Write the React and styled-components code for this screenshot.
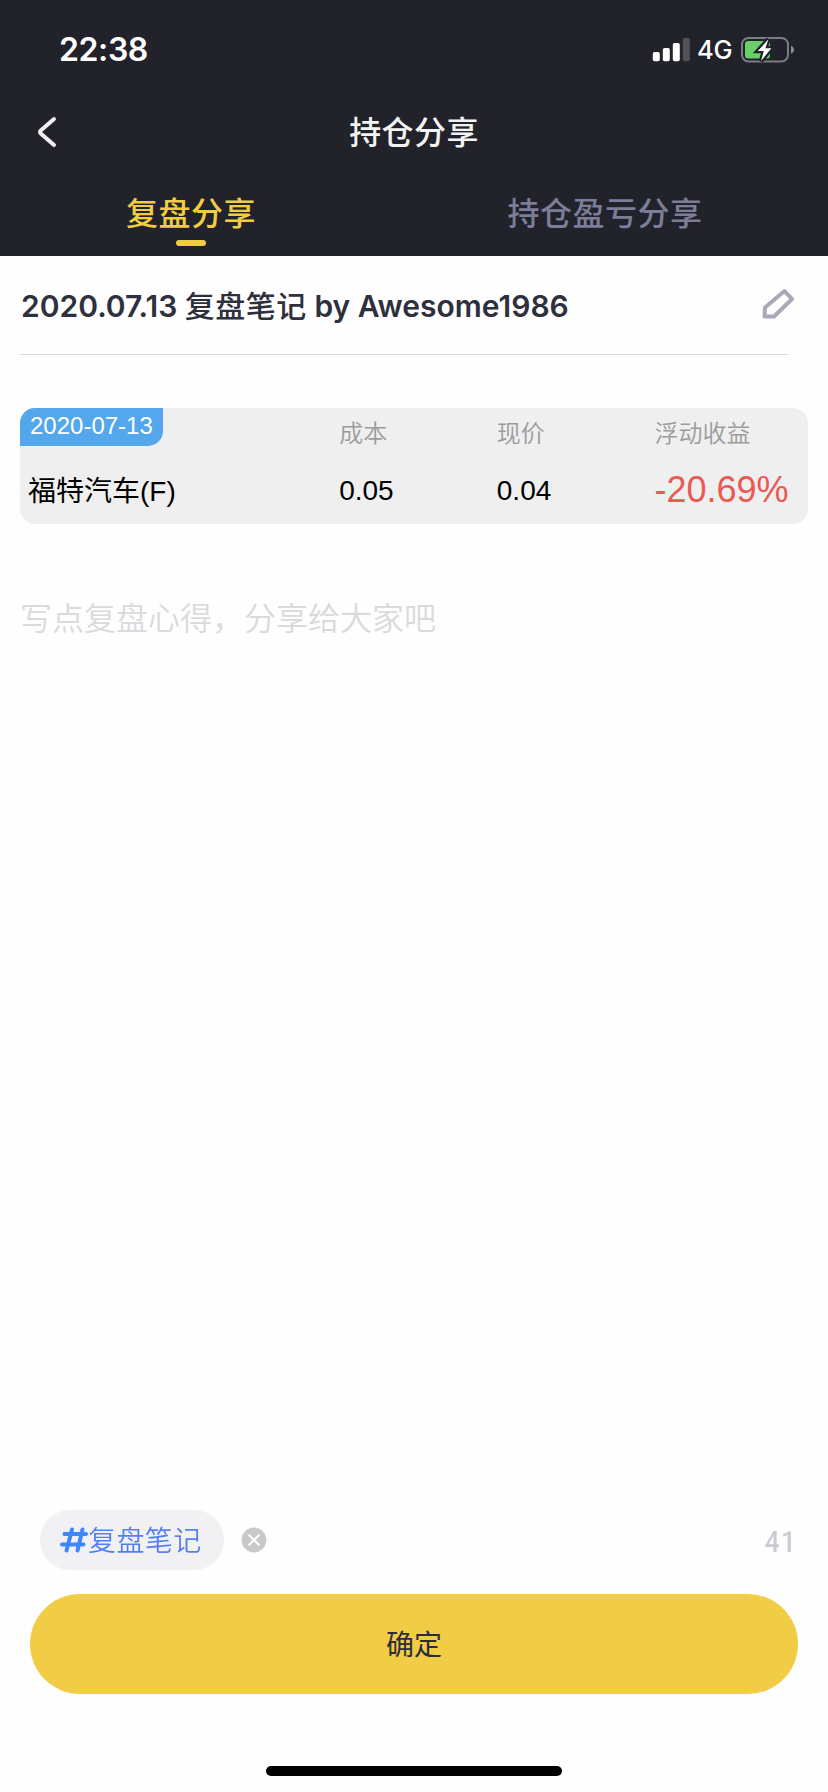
import React from 'react';
import styled, { createGlobalStyle } from 'styled-components';

const GlobalStyle = createGlobalStyle`
  *, *::before, *::after { box-sizing: border-box; }
  body { margin: 0; background: #fefefe; }
`;

const ui = `Inter, 'Noto Sans CJK SC', sans-serif`;
const plain = `'Liberation Sans', 'Noto Sans CJK SC', sans-serif`;

const Screen = styled.div`
  display: flex;
  flex-direction: column;
  width: 828px;
  height: 1792px;
  background: #fefefe;
  font-family: ${ui};
  overflow: hidden;
`;

const Header = styled.header`
  height: 256px;
  background: #21222a;
  color: #f2f2f2;
`;

const StatusBar = styled.div`
  display: flex;
  align-items: center;
  justify-content: space-between;
  height: 99px;
  padding: 0 34px 0 59px;
  color: #fff;
`;

const Clock = styled.span`
  padding-top: 1px;
  font-size: 32px;
  font-weight: 600;
  line-height: 40px;
  letter-spacing: -0.4px;
`;

const StatusIcons = styled.div`
  display: flex;
  align-items: center;
  height: 40px;
`;

const Network = styled.span`
  width: 51px;
  padding: 1px 0 0 7px;
  font-size: 25.5px;
  font-weight: 500;
  line-height: 40px;
  letter-spacing: -0.3px;
`;

const NavBar = styled.div`
  display: grid;
  grid-template-columns: 100px 1fr 100px;
  align-items: center;
  height: 66px;
`;

const BackButton = styled.button`
  display: flex;
  padding: 0 0 0 36px;
  border: 0;
  background: none;
`;

const NavTitle = styled.h1`
  margin: 0;
  padding-top: 2px;
  font-size: 32px;
  font-weight: 500;
  line-height: 44px;
  letter-spacing: 0.4px;
  text-align: center;
`;

const Tabs = styled.nav`
  display: flex;
`;

const Tab = styled.div`
  display: flex;
  flex-direction: column;
  align-items: center;
  gap: 4px;
  width: ${(p) => p.$width}px;
  padding-top: 26px;
  color: ${(p) => (p.$active ? '#f0cd45' : '#7c7d98')};
  font-size: 32px;
  font-weight: 500;
  line-height: 45px;
  letter-spacing: 0.5px;
  white-space: nowrap;
`;

const TabMark = styled.i`
  width: 30px;
  height: 6px;
  border-radius: 3px;
  background: #f0cd45;
`;

const TitleRow = styled.div`
  display: flex;
  align-items: center;
  justify-content: space-between;
  height: 99px;
  margin: 0 40px 0 20px;
  padding-left: 1px;
  border-bottom: 1px solid #dadada;
`;

const NoteTitle = styled.h2`
  margin: 1px 0 0;
  color: #2f303d;
  font-size: 30px;
  font-weight: 600;
  line-height: 44px;
  white-space: nowrap;
`;

const NoteKind = styled.span`
  font-weight: 500;
  letter-spacing: 0.5px;
`;

const EditIcon = styled.svg`
  flex: none;
  margin: 0 -7px 2px 0;
`;

const Card = styled.section`
  display: grid;
  grid-template-columns: 2fr 1fr 1fr 1fr;
  grid-template-rows: 50px 66px;
  width: 788px;
  margin: 53px 20px 0;
  border-radius: 15px;
  background: #efefef;
  font-family: ${plain};
  overflow: hidden;
`;

const DateBadge = styled.div`
  justify-self: start;
  width: 143px;
  height: 38px;
  padding-left: 10px;
  border-radius: 0 0 15px 0;
  background: #54a7ec;
  color: #fff;
  font-size: 24px;
  line-height: 36px;
`;

const Label = styled.div`
  padding-left: 4px;
  color: #9b9b9b;
  font-size: 24px;
  font-weight: 350;
  line-height: 52px;
`;

const Value = styled.div`
  padding-left: ${(p) => (p.$name ? 8 : 4)}px;
  color: ${(p) => (p.$loss ? '#ea5a55' : '#000')};
  font-size: ${(p) => (p.$loss ? 36 : 28)}px;
  line-height: ${(p) => (p.$loss ? 64 : p.$name ? 68 : 66)}px;
  white-space: nowrap;
`;

const Editor = styled.div`
  flex: 1;
  padding: 72px 20px 0;
  color: #dadadd;
  font-size: 32px;
  font-weight: 350;
  line-height: 46px;
`;

const TagBar = styled.div`
  display: flex;
  align-items: center;
  height: 60px;
  margin: 0 31px 24px 40px;
`;

const Tag = styled.div`
  display: flex;
  align-items: center;
  width: 184px;
  height: 60px;
  padding-left: 20px;
  border-radius: 30px;
  background: #f1f1f4;
`;

const TagText = styled.span`
  padding: 2px 0 0 0;
  background: linear-gradient(90deg, #4a80f8, #5b7cf2);
  background-clip: text;
  color: transparent;
  font-size: 28px;
  font-weight: 350;
  line-height: 40px;
  letter-spacing: 0.4px;
`;

const RemoveButton = styled.button`
  display: flex;
  margin-left: 17px;
  padding: 0;
  border: 0;
  background: none;
`;

const Counter = styled.span`
  margin-left: auto;
  padding-top: 3px;
  color: #c9cad3;
  font-family: Roboto, sans-serif;
  font-size: 30px;
  font-weight: 500;
  line-height: 40px;
  letter-spacing: 1.5px;
  transform: scaleX(0.87);
  transform-origin: right center;
`;

const Confirm = styled.button`
  height: 100px;
  margin: 0 30px;
  padding: 0 0 2px;
  border: 0;
  border-radius: 50px;
  background: #f0cd45;
  color: #2c2d3a;
  font-family: ${ui};
  font-size: 28px;
  font-weight: 400;
`;

const HomeIndicator = styled.div`
  align-self: center;
  width: 296px;
  height: 10px;
  margin: 72px 0 16px;
  border-radius: 5px;
  background: #000;
`;

const Signal = () => (
  <svg width="38" height="24" viewBox="0 0 38 24" fill="#fff">
    <rect x="0.8" y="14" width="7" height="9.2" rx="1.8" />
    <rect x="10.8" y="10" width="7" height="13.2" rx="1.8" />
    <rect x="20.8" y="5" width="7" height="18.2" rx="1.8" />
    <rect x="30.8" y="0" width="7" height="23.2" rx="1.8" opacity="0.22" />
  </svg>
);

const Battery = () => (
  <svg width="53" height="26" viewBox="0 0 53 26">
    <rect x="1" y="1" width="46" height="23.4" rx="6.5" fill="none" stroke="#7c7d82" strokeWidth="2" />
    <rect x="4" y="4" width="25" height="17.4" rx="3.2" fill="#68d067" />
    <path d="M50 8.7c4 1.6 4 6.5 0 8.1z" fill="#8c8d91" />
    <path d="M27.5 2.2 16.8 14h6L20 24 30.4 11.2h-6z" fill="#fff" stroke="#21222a" strokeWidth="4.5" />
    <path d="M27.5 2.2 16.8 14h6L20 24 30.4 11.2h-6z" fill="#fff" />
  </svg>
);

const columns = [
  { label: '成本', value: '0.05' },
  { label: '现价', value: '0.04' },
  { label: '浮动收益', value: '-20.69%', loss: true },
];

export default function App() {
  return (
    <Screen>
      <GlobalStyle />
      <Header>
        <StatusBar>
          <Clock>22:38</Clock>
          <StatusIcons>
            <Signal />
            <Network>4G</Network>
            <Battery />
          </StatusIcons>
        </StatusBar>
        <NavBar>
          <BackButton aria-label="返回">
            <svg width="22" height="32" viewBox="0 0 22 32" fill="none" stroke="#f0f0f0" strokeWidth="4" strokeLinecap="round" strokeLinejoin="round">
              <path d="M18 3 5 14.2q-2 1.8 0 3.6L18 29" />
            </svg>
          </BackButton>
          <NavTitle>持仓分享</NavTitle>
        </NavBar>
        <Tabs>
          <Tab $active $width={382}>
            复盘分享
            <TabMark />
          </Tab>
          <Tab $width={446}>持仓盈亏分享</Tab>
        </Tabs>
      </Header>
      <TitleRow>
        <NoteTitle>
          2020.07.13 <NoteKind>复盘笔记</NoteKind> by Awesome1986
        </NoteTitle>
        <EditIcon width="34" height="32" viewBox="0 0 34 32" fill="none" stroke="#a8a9b8" strokeWidth="4" strokeLinejoin="round">
          <path d="M23.5 3 31 11 13 28.5H3.5L4 19.5Z" />
        </EditIcon>
      </TitleRow>
      <Card>
        <DateBadge>2020-07-13</DateBadge>
        {columns.map((c) => (
          <Label key={c.label}>{c.label}</Label>
        ))}
        <Value $name>福特汽车(F)</Value>
        {columns.map((c) => (
          <Value key={c.label} $loss={c.loss}>{c.value}</Value>
        ))}
      </Card>
      <Editor>写点复盘心得，分享给大家吧</Editor>
      <TagBar>
        <Tag>
          <svg width="28" height="26" viewBox="0 0 28 26" fill="none" stroke="#3f86f8" strokeWidth="4" strokeLinecap="round">
            <path d="M4.5 7H26M2 17.5H23.5M12 2.5 6.5 23.5M22.5 2.5 17.5 23.5" />
          </svg>
          <TagText>复盘笔记</TagText>
        </Tag>
        <RemoveButton aria-label="删除">
          <svg width="26" height="26" viewBox="0 0 26 26">
            <circle cx="13" cy="13" r="12.4" fill="#c9c9c9" />
            <path d="m8.2 8.2 9.6 9.6m0-9.6-9.6 9.6" stroke="#fff" strokeWidth="2" strokeLinecap="round" />
          </svg>
        </RemoveButton>
        <Counter>41</Counter>
      </TagBar>
      <Confirm>确定</Confirm>
      <HomeIndicator />
    </Screen>
  );
}
